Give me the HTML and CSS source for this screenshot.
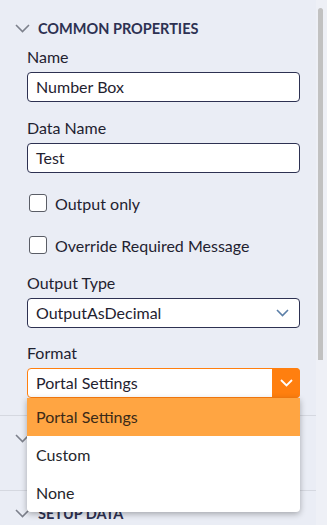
FILE: index.html
```html
<!DOCTYPE html>
<html lang="en">
<head>
  <meta charset="UTF-8" />
  <meta name="viewport" content="width=device-width, initial-scale=1" />
  <title>Properties</title>
  <link rel="stylesheet" href="styles.css">
</head>
<body>
  <div class="panel">
    <!-- Common properties -->
    <div class="section open">
      <div class="section-head">
        <svg class="chev" width="15" height="9" viewBox="0 0 15 9"><path d="M1 1l6.5 6.5L14 1" fill="none" stroke="#7d818c" stroke-width="1.6"/></svg>
        <span>COMMON PROPERTIES</span>
      </div>
      <div class="section-body">
        <label class="field-label">Name</label>
        <div class="input">Number Box</div>

        <label class="field-label gap">Data Name</label>
        <div class="input">Test</div>

        <div class="check first"><span class="box"></span>Output only</div>
        <div class="check"><span class="box"></span>Override Required Message</div>

        <label class="field-label gap wide">Output Type</label>
        <div class="select">
          <span>OutputAsDecimal</span>
          <svg width="13" height="8" viewBox="0 0 13 8"><path d="M1 1l5.5 5.5L12 1" fill="none" stroke="#5b7fa8" stroke-width="1.6"/></svg>
        </div>

        <label class="field-label gap narrow">Format</label>
        <div class="select-wrap">
          <div class="select active">
            <span>Portal Settings</span>
            <span class="select-btn">
              <svg width="13" height="8" viewBox="0 0 13 8"><path d="M1 1l5.5 5.5L12 1" fill="none" stroke="#fff" stroke-width="1.8"/></svg>
            </span>
          </div>
          <ul class="dropdown">
            <li class="selected">Portal Settings</li>
            <li>Custom</li>
            <li>None</li>
          </ul>
        </div>
      </div>
    </div>

    <div class="section closed tall">
      <div class="section-head">
        <svg class="chev" width="15" height="9" viewBox="0 0 15 9"><path d="M1 1l6.5 6.5L14 1" fill="none" stroke="#7d818c" stroke-width="1.6"/></svg>
        <span>VALIDATION</span>
      </div>
    </div>

    <div class="section closed">
      <div class="section-head">
        <svg class="chev" width="15" height="9" viewBox="0 0 15 9"><path d="M1 1l6.5 6.5L14 1" fill="none" stroke="#7d818c" stroke-width="1.6"/></svg>
        <span>SETUP DATA</span>
      </div>
    </div>
  </div>

  <div class="scroll-track"><div class="scroll-thumb"></div></div>
</body>
</html>
```

FILE: styles.css
```css
/* Global */
html, body {
  height: 100%;
}
body {
  margin: 0;
  display: flex;
  overflow: hidden;
  background-color: #eaedf5;
  font-family: Lato, "Open Sans", sans-serif;
  font-size: 16px;
  color: #1f2230;
}

.panel {
  flex: 1;
  padding-top: 12px;
}

/* Sections */
.section-head {
  display: flex;
  align-items: center;
  gap: 8px;
  height: 32px;
  padding-left: 15px;
  font-weight: bold;
  font-size: 14.5px;
  color: #2d3152;
}
.section-body {
  padding: 3px 16px 17px 27px;
}
.section.closed {
  border-top: 1px solid #d5d8e0;
  padding-top: 6px;
}
.section.tall {
  height: 68px;
}

/* Fields */
.field-label {
  display: block;
  line-height: 20px;
  margin-bottom: 5px;
}
.field-label.gap {
  margin-top: 16px;
}
.field-label.wide {
  margin-top: 18px;
}
.field-label.narrow {
  margin-top: 15px;
}
.input,
.select {
  height: 28px;
  border: 1px solid #2d3152;
  border-radius: 4px;
  background-color: #fff;
  padding-left: 8px;
  line-height: 28px;
}
.select {
  display: flex;
  align-items: center;
  justify-content: space-between;
  padding-right: 10px;
}
.select.active {
  border-color: #ff7f0f;
  padding-right: 0;
}
.select-btn {
  width: 28px;
  height: 30px;
  margin: -1px -1px -1px 0;
  display: flex;
  align-items: center;
  justify-content: center;
  background-color: #ff7f0f;
  border-radius: 0 4px 4px 0;
}

/* Checkboxes */
.check {
  display: flex;
  align-items: center;
  gap: 8px;
  height: 20px;
  margin-top: 22px;
  padding-left: 2px;
}
.check.first {
  margin-top: 20px;
}
.check .box {
  width: 16px;
  height: 16px;
  border: 1px solid #5a5d66;
  border-radius: 3px;
  background-color: #fff;
}

/* Dropdown overlay */
.select-wrap {
  position: relative;
}
.dropdown {
  position: absolute;
  top: 100%;
  left: 0;
  right: 0;
  margin: 0;
  padding: 0;
  list-style: none;
  background-color: #fff;
  border-radius: 0 0 4px 4px;
  box-shadow: 0 2px 6px rgba(0, 0, 0, 0.3);
  z-index: 2;
  overflow: hidden;
}
.dropdown li {
  height: 38px;
  line-height: 38px;
  padding-left: 9px;
  color: #25262b;
}
.dropdown li.selected {
  background-color: #ffa542;
  color: #3b2a18;
}

/* Scrollbar */
.scroll-track {
  width: 11px;
  background-color: #eef0f6;
}
.scroll-thumb {
  width: 5px;
  height: 352px;
  margin: 8px 0 0 2px;
  border-radius: 3px 3px 0 0;
  background-color: #c1c1c1;
}
```
